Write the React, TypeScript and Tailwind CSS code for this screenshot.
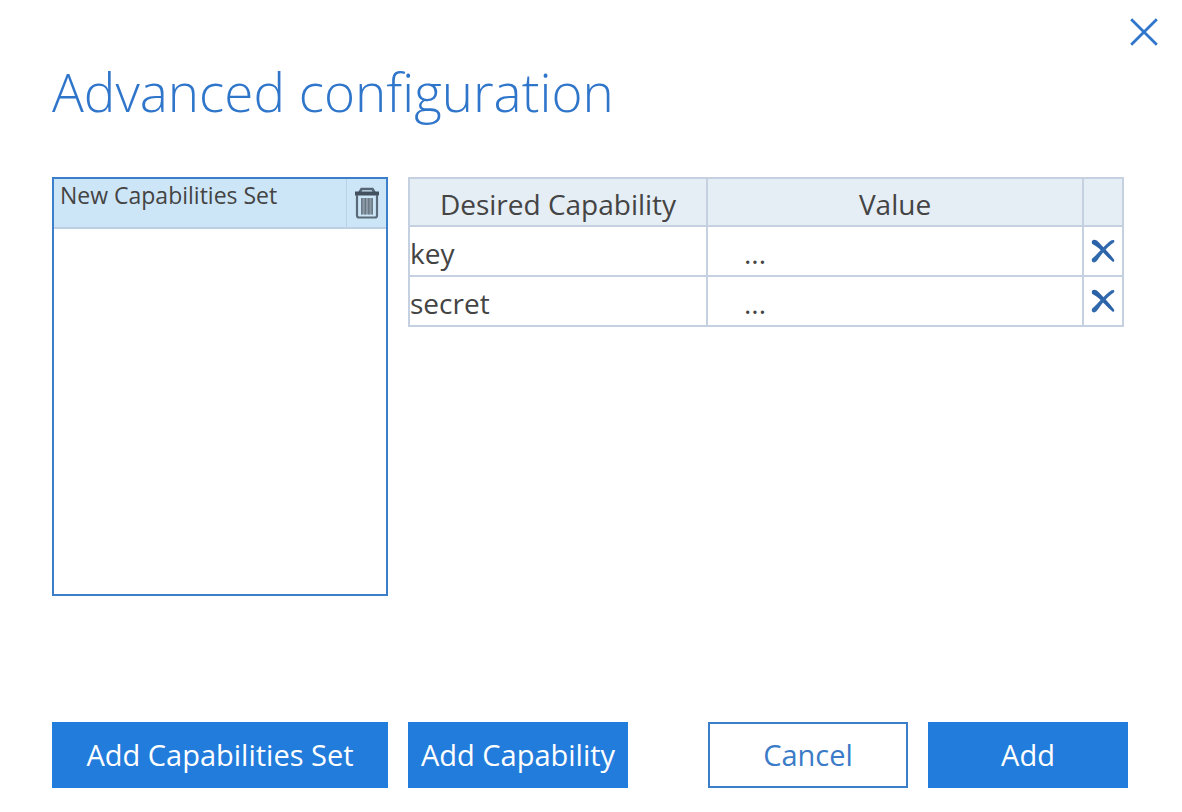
import { useState } from 'react';

type Capability = { id: number; name: string; value: string };

const actionButton = 'h-[66px] border-2 text-[29px] leading-9 whitespace-nowrap';
const primary = 'border-[#227cdc] bg-[#227cdc] text-white hover:bg-[#1b6bc0]';
const cell = 'border-2 border-[#c5d1e0] p-0';

function CloseIcon() {
  return (
    <svg width="28" height="28" viewBox="0 0 28 28" fill="none" stroke="#2f76cb" strokeWidth="2.8" aria-hidden="true">
      <path d="M1.2 1.2 26.8 26.8M26.8 1.2 1.2 26.8" />
    </svg>
  );
}

function TrashIcon() {
  return (
    <svg width="26" height="32" viewBox="0 0 26 32" fill="none" aria-hidden="true">
      <path d="M5.5 5.5 7.5 2H18.5L20.5 5.5" stroke="#566676" strokeWidth="2.6" />
      <path d="M1 6.5H25" stroke="#43515f" strokeWidth="4" />
      <path d="M3 8V28.5Q3 30.5 5 30.5H21Q23 30.5 23 28.5V8" stroke="#5a6a79" strokeWidth="2.2" />
      <rect x="7" y="11" width="12" height="16.5" fill="#8c9aa6" />
      <path d="M7.8 11V27.5M11.3 11V27.5M14.8 11V27.5M18.2 11V27.5" stroke="#687784" strokeWidth="1.4" />
    </svg>
  );
}

function RemoveIcon() {
  return (
    <svg width="24" height="24" viewBox="0 0 24 24" aria-hidden="true">
      <path
        d="M.8 2.5Q1.2.6 3.5.8Q6 1 8 3.500C12 8 18 13.500 23 20.500Q23.800 22.800 21.800 22.800C16.500 18.500 12.500 13.500 8 9.500C5.500 7.300 3 6 1 4.800Z"
        fill="#2b62a8"
      />
      <path
        d="M23 1Q23.800 2.500 22.800 3.500C18.500 6.500 15.500 9.500 12.500 13C9.500 16.500 7.500 20 5.200 22.600Q3.500 24 1.500 23Q.3 22 1 19.800C7 15 13 6 20.500 1.200Z"
        fill="#3169ad"
      />
    </svg>
  );
}

export default function App() {
  const [sets, setSets] = useState(['New Capabilities Set']);
  const [selected, setSelected] = useState(0);
  const [capabilities, setCapabilities] = useState<Capability[]>([
    { id: 1, name: 'key', value: '...' },
    { id: 2, name: 'secret', value: '...' },
  ]);

  const addSet = () => setSets([...sets, 'New Capabilities Set']);
  const removeSet = (index: number) => {
    setSets(sets.filter((_, i) => i !== index));
    setSelected(0);
  };

  const addCapability = () => setCapabilities([...capabilities, { id: Date.now(), name: '', value: '' }]);
  const removeCapability = (id: number) => setCapabilities(capabilities.filter((c) => c.id !== id));

  return (
    <main className="flex min-h-screen flex-col bg-white pr-6 pb-6 pl-[52px] font-['Open_Sans','Noto_Sans',sans-serif] text-[#444444]">
      <header className="flex items-start justify-between pt-[18px]">
        <h1 className="pt-[38px] text-[53px] leading-[72px] font-light text-[#2f76cb]">Advanced configuration</h1>
        <button type="button" aria-label="Close">
          <CloseIcon />
        </button>
      </header>

      <div className="mt-[49px] flex items-start gap-5 pr-[34px]">
        {/* capability sets */}
        <ul className="h-[419px] w-[336px] shrink-0 overflow-y-auto border-2 border-[#3b7fcb]">
          {sets.map((name, index) => (
            <li
              key={index}
              className={`flex h-[50px] border-b-2 border-[#bccfe3] ${index === selected ? 'bg-[#cde6f7]' : 'bg-white'}`}
            >
              <button
                type="button"
                onClick={() => setSelected(index)}
                className="flex flex-1 items-start border-r border-[#b8d2e8] pl-1.5 text-left text-[23px] leading-8 whitespace-nowrap"
              >
                {name}
              </button>
              <button
                type="button"
                aria-label="Delete set"
                onClick={() => removeSet(index)}
                className="flex w-[39px] items-center justify-center"
              >
                <TrashIcon />
              </button>
            </li>
          ))}
        </ul>

        {/* capabilities of the selected set */}
        <table className="flex-1 table-fixed border-collapse text-[28px] leading-9">
          <colgroup>
            <col className="w-[298px]" />
            <col />
            <col className="w-10" />
          </colgroup>
          <thead>
            <tr className="h-12 bg-[#e5edf5]">
              <th className={`${cell} pt-1 font-normal`}>Desired Capability</th>
              <th className={`${cell} pt-1 font-normal`}>Value</th>
              <td className={cell} />
            </tr>
          </thead>
          <tbody>
            {capabilities.map((c) => (
              <tr key={c.id} className="h-[50px]">
                <td className={`${cell} pt-1`}>{c.name}</td>
                <td className={`${cell} pt-1 pl-9`}>{c.value}</td>
                <td className={cell}>
                  <button
                    type="button"
                    aria-label={`Remove ${c.name}`}
                    onClick={() => removeCapability(c.id)}
                    className="flex w-full justify-center"
                  >
                    <RemoveIcon />
                  </button>
                </td>
              </tr>
            ))}
          </tbody>
        </table>
      </div>

      <footer className="mt-auto flex gap-5 pr-[30px]">
        <button type="button" onClick={addSet} className={`${actionButton} ${primary} w-[336px]`}>
          Add Capabilities Set
        </button>
        <button type="button" onClick={addCapability} className={`${actionButton} ${primary} w-[220px]`}>
          Add Capability
        </button>
        <button
          type="button"
          className={`${actionButton} ml-auto w-[200px] border-[#3b7fcb] bg-white text-[#3b7bc8] hover:bg-[#eef5fc]`}
        >
          Cancel
        </button>
        <button type="button" className={`${actionButton} ${primary} w-[200px]`}>
          Add
        </button>
      </footer>
    </main>
  );
}
